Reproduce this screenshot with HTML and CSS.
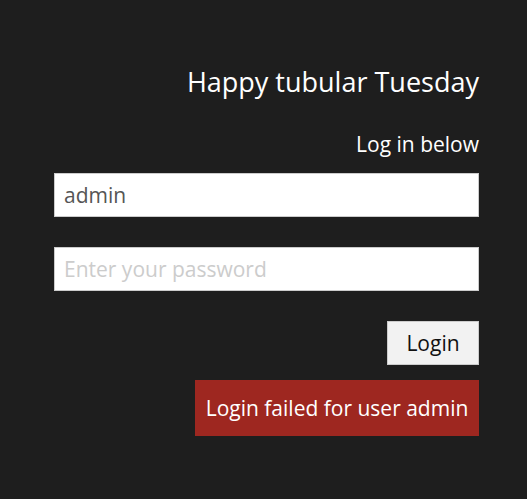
FILE: index.html
```html
<!DOCTYPE html>
<html>
<head>
<meta charset="utf-8">
<link rel="stylesheet" href="styles.css">
</head>
<body>
<div class="wrap">
  <h1 class="title">Happy tubular Tuesday</h1>
  <p class="sub">Log in below</p>
  <input class="field" type="text" value="admin">
  <input class="field" type="password" placeholder="Enter your password">
  <div class="actions"><button class="btn">Login</button></div>
  <div class="actions"><div class="error">Login failed for user admin</div></div>
</div>
</body>
</html>
```
FILE: styles.css
```css
html, body {
  margin: 0;
  padding: 0;
  background: #1e1e1e;
  font-family: "Open Sans", sans-serif;
  color: #fff;
}
.wrap {
  display: flex;
  flex-direction: column;
  margin: 0 48px 0 54px;
  padding-top: 62px;
}
.title {
  margin: 0;
  font-size: 27px;
  font-weight: 400;
  text-align: right;
  line-height: 40px;
}
.sub {
  margin: 27px 0 0;
  font-size: 21px;
  text-align: right;
  line-height: 30px;
}
.field {
  box-sizing: border-box;
  height: 44px;
  width: 100%;
  margin: 0 0 30px;
  padding: 0 9px;
  border: 1px solid #ccc;
  background: #fff;
  font-family: "Open Sans", sans-serif;
  font-size: 21px;
  color: #555;
  outline: none;
}
.field:first-of-type { margin-top: 14px; }
.field::placeholder { color: #ccc; }
.actions {
  display: flex;
  justify-content: flex-end;
}
.btn {
  box-sizing: border-box;
  height: 44px;
  width: 92px;
  border: 1px solid #ccc;
  background: #f2f2f2;
  font-family: "Open Sans", sans-serif;
  font-size: 21px;
  color: #111;
  padding: 0;
}
.error {
  margin-top: 15px;
  background: #9e2720;
  height: 56px;
  width: 284px;
  box-sizing: border-box;
  display: flex;
  align-items: center;
  justify-content: center;
  font-size: 21px;
  color: #fff;
}
```
